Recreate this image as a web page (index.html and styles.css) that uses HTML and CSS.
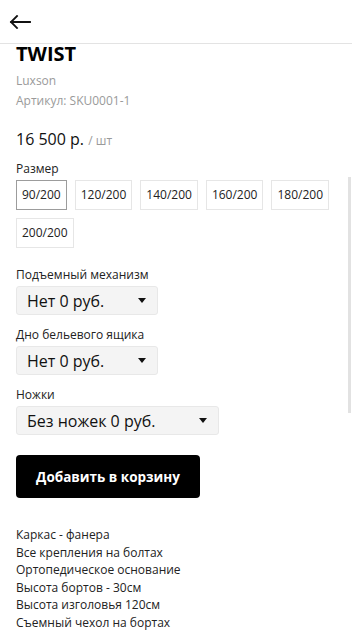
FILE: index.html
```html
<!DOCTYPE html>
<html lang="ru">
<head>
    <meta charset="UTF-8">
    <meta name="viewport" content="width=device-width, initial-scale=1.0">
    <title>TWIST</title>
    <link rel="stylesheet" href="styles.css">
</head>
<body>
    <header class="top-bar">
        <a href="#" class="back-link" aria-label="Назад">
            <svg width="22" height="14" viewBox="0 0 22 14">
                <path d="M21 7H2M8 1L2 7l6 6" fill="none" stroke="#111" stroke-width="1.8" stroke-linecap="square"/>
            </svg>
        </a>
    </header>

    <main class="product">
        <h1 class="product-title">TWIST</h1>
        <div class="product-meta">Luxson</div>
        <div class="product-meta">Артикул: SKU0001-1</div>

        <div class="product-price">16 500 р. <span class="unit">/ шт</span></div>

        <div class="option-group sizes-group">
            <div class="option-label">Размер</div>
            <div class="sizes">
                <button class="size-btn active">90/200</button>
                <button class="size-btn">120/200</button>
                <button class="size-btn">140/200</button>
                <button class="size-btn">160/200</button>
                <button class="size-btn">180/200</button>
                <button class="size-btn">200/200</button>
            </div>
        </div>

        <div class="option-group">
            <div class="option-label">Подъемный механизм</div>
            <div class="select select-sm">
                <span>Нет 0 руб.</span>
                <span class="caret"></span>
            </div>
        </div>

        <div class="option-group">
            <div class="option-label">Дно бельевого ящика</div>
            <div class="select select-sm">
                <span>Нет 0 руб.</span>
                <span class="caret"></span>
            </div>
        </div>

        <div class="option-group">
            <div class="option-label">Ножки</div>
            <div class="select select-lg">
                <span>Без ножек 0 руб.</span>
                <span class="caret"></span>
            </div>
        </div>

        <button class="add-to-cart">Добавить в корзину</button>

        <div class="description">
            Каркас - фанера<br>
            Все крепления на болтах<br>
            Ортопедическое основание<br>
            Высота бортов - 30см<br>
            Высота изголовья 120см<br>
            Съемный чехол на бортах
        </div>
    </main>

    <div class="scroll-thumb"></div>
</body>
</html>
```

FILE: styles.css
```css
body {
    font-family: 'Open Sans', 'Noto Sans', sans-serif;
    margin: 0;
    padding: 0;
    background-color: #fff;
    color: #111;
    overflow: hidden;
}
.top-bar {
    height: 44px;
    box-sizing: border-box;
    border-bottom: 1px solid #e3e3e3;
    display: flex;
    align-items: center;
    padding-left: 9px;
}
.back-link {
    display: flex;
    margin-top: 1px;
}
.product {
    padding: 0 16px;
}
.product-title {
    font-size: 20px;
    font-weight: 700;
    line-height: 20px;
    margin: 0 0 7px;
    color: #000;
}
.product-meta {
    font-size: 12px;
    line-height: 20px;
    color: #9a9a9a;
}
.product-price {
    font-size: 16px;
    line-height: 22px;
    margin-top: 17px;
    color: #111;
}
.product-price .unit {
    font-size: 12px;
    color: #9a9a9a;
}
.option-group {
    margin-top: 11px;
}
.option-label {
    font-size: 12px;
    line-height: 17px;
    color: #222;
    margin-bottom: 3px;
}
.sizes-group {
    margin-top: 8px;
    margin-bottom: 18px;
}
.sizes {
    display: flex;
    flex-wrap: wrap;
    gap: 8px;
}
.size-btn {
    font-family: inherit;
    font-size: 12px;
    height: 30px;
    line-height: 28px;
    padding: 0 5px;
    background: #fff;
    border: 1px solid #e6e6e6;
    color: #222;
    border-radius: 0;
    cursor: pointer;
}
.size-btn.active {
    border-color: #9c9c9c;
}
.select {
    height: 29px;
    box-sizing: border-box;
    display: flex;
    align-items: center;
    justify-content: space-between;
    padding: 0 11px 0 10px;
    background-color: #f4f4f4;
    border: 1px solid #e8e8e8;
    border-radius: 3px;
    font-size: 16px;
    color: #111;
}
.select-sm {
    width: 142px;
}
.select-lg {
    width: 203px;
}
.caret {
    width: 0;
    height: 0;
    border-left: 4px solid transparent;
    border-right: 4px solid transparent;
    border-top: 5px solid #111;
}
.add-to-cart {
    display: block;
    margin-top: 20px;
    width: 184px;
    height: 43px;
    background-color: #000;
    color: #fff;
    border: none;
    border-radius: 4px;
    font-family: inherit;
    font-size: 13.5px;
    font-weight: 700;
    cursor: pointer;
}
.description {
    margin-top: 28px;
    font-size: 12px;
    line-height: 17.5px;
    color: #222;
}
.scroll-thumb {
    position: absolute;
    left: 348px;
    top: 177px;
    width: 3px;
    height: 236px;
    background-color: #e2e2e2;
}
```
